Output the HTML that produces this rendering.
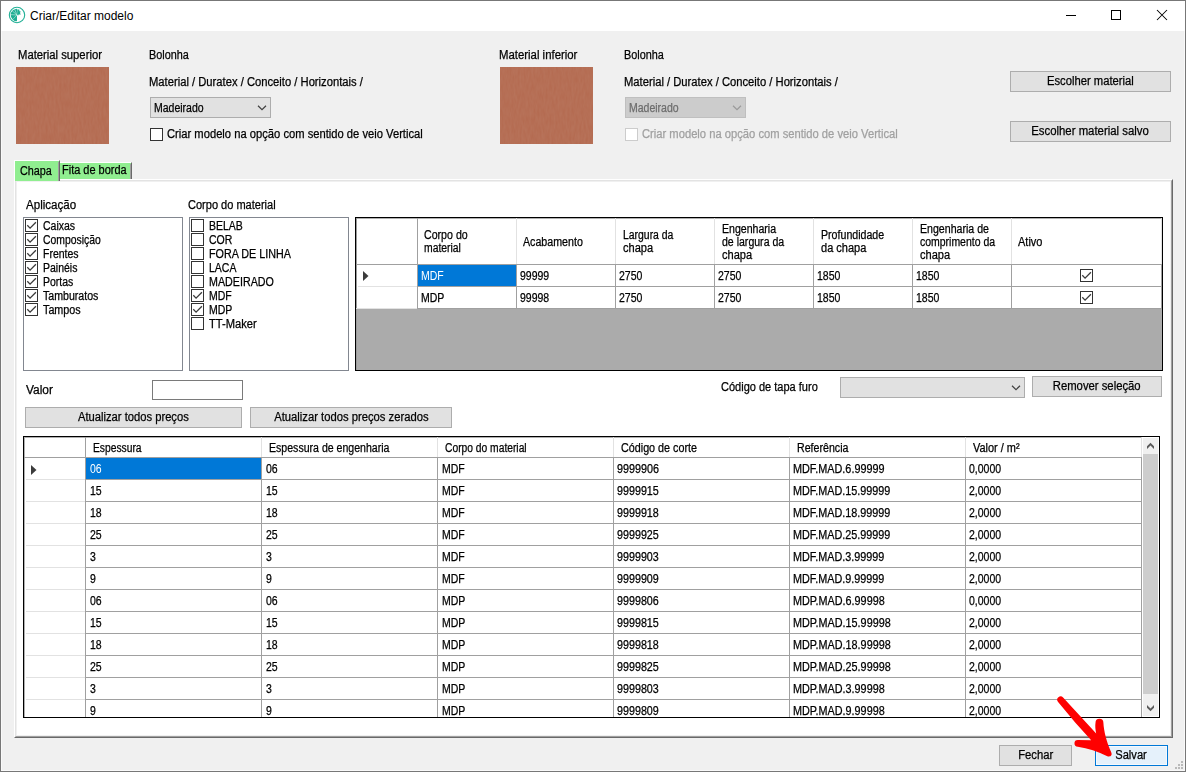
<!DOCTYPE html>
<html>
<head>
<meta charset="utf-8">
<title>Criar/Editar modelo</title>
<style>
*{box-sizing:border-box;margin:0;padding:0}
html,body{width:1186px;height:772px;overflow:hidden;background:#f0f0f0}
body{font-family:"Liberation Sans",sans-serif;font-size:12px;color:#000;position:relative}
.a{position:absolute}
.t{position:absolute;white-space:nowrap;line-height:14px;height:14px;transform-origin:0 50%;-webkit-text-stroke:0.25px}
.btn{position:absolute;background:#e1e1e1;border:1px solid #adadad;text-align:center;line-height:14px;white-space:nowrap;padding-top:2px}
.btn .s{display:inline-block;transform-origin:50% 50%;-webkit-text-stroke:0.25px}
.cb{position:absolute;width:13px;height:13px;background:#fff;border:1px solid #333}
.cb svg{position:absolute;left:-1px;top:-1px}
.lb{position:absolute;background:#fff;border:1px solid #828790}
.hl{position:absolute;height:1px;background:#a0a0a0}
.vl{position:absolute;width:1px;background:#a0a0a0}
</style>
</head>
<body>

<div class="a" style="left:1px;top:1px;width:1184px;height:30px;background:#fff"></div>
<div class="a" style="left:1px;top:31px;width:1184px;height:740px;border:1px solid #f9f9f9;border-top:none"></div>
<div class="a" style="left:0;top:0;width:1186px;height:772px;border:1px solid #777"></div>
<svg class="a" style="left:8px;top:6px" width="18" height="18" viewBox="0 0 18 18">
<circle cx="9" cy="9" r="7.7" fill="#fff" stroke="#22b096" stroke-width="1.1"/>
<path d="M9 9 L9 2.7 A6.3 6.3 0 0 0 9 15.3 Z" fill="#1eae93"/>
<path d="M9 9 L9.4 3.2 L11.6 3.8 L11.2 5 L12.9 5.8 L11.9 6.8 L12.8 8.4 L10.6 8.6 L10.3 9.6 Z" fill="#1eae93"/>
<path d="M9 9 L4.2 4.8 M9 9 L2.7 8.6 M9 9 L4.6 13.6 M9 9 L6.6 3.2" stroke="#fff" stroke-width="0.45" fill="none"/>
</svg>
<div class="a" id="title" style="left:30px;top:9px;font-size:12px;line-height:14px;white-space:nowrap">Criar/Editar modelo</div>
<svg class="a" style="left:1060px;top:5px" width="120" height="22" viewBox="0 0 120 22">
<path d="M6 10.5 H16" stroke="#000" stroke-width="1" fill="none"/>
<rect x="51.5" y="5.5" width="9" height="9" stroke="#000" stroke-width="1" fill="none"/>
<path d="M97 5 L107 15 M107 5 L97 15" stroke="#000" stroke-width="1.05" fill="none"/>
</svg>
<div class="t" style="left:18px;top:48px;transform:scaleX(0.939)">Material superior</div>
<svg class="a" style="left:16px;top:67px" width="93" height="77" viewBox="0 0 93 77">
<defs><filter id="g1" x="0" y="0" width="100%" height="100%"><feTurbulence type="fractalNoise" baseFrequency="0.5 0.12" numOctaves="2" seed="3"/><feColorMatrix values="0 0 0 0 0.56  0 0 0 0 0.3  0 0 0 0 0.22  0.3 0 0 0 -0.06"/></filter></defs>
<rect width="93" height="77" fill="#b46b51"/><rect width="93" height="77" filter="url(#g1)"/></svg>
<div class="t" style="left:149px;top:48px;transform:scaleX(0.904)">Bolonha</div>
<div class="t" style="left:149px;top:75px;transform:scaleX(0.935)">Material / Duratex / Conceito / Horizontais /</div>
<div class="a" style="left:150px;top:97px;width:121px;height:21px;background:#e1e1e1;border:1px solid #adadad"></div>
<div class="t" style="left:154px;top:101px;transform:scaleX(0.875)">Madeirado</div>
<svg class="a" style="left:257px;top:104px" width="10" height="7" viewBox="0 0 10 7"><path d="M1 1.8 L5 5.7 L9 1.8" stroke="#404040" stroke-width="1.2" fill="none"/></svg>
<div class="cb" style="left:150px;top:128px;"></div>
<div class="t" style="left:167px;top:127px;transform:scaleX(0.933)">Criar modelo na opção com sentido de veio Vertical</div>
<div class="t" style="left:499px;top:48px;transform:scaleX(0.948)">Material inferior</div>
<svg class="a" style="left:500px;top:67px" width="93" height="77" viewBox="0 0 93 77">
<defs><filter id="g2" x="0" y="0" width="100%" height="100%"><feTurbulence type="fractalNoise" baseFrequency="0.5 0.12" numOctaves="2" seed="7"/><feColorMatrix values="0 0 0 0 0.56  0 0 0 0 0.3  0 0 0 0 0.22  0.3 0 0 0 -0.06"/></filter></defs>
<rect width="93" height="77" fill="#b46b51"/><rect width="93" height="77" filter="url(#g2)"/></svg>
<div class="t" style="left:624px;top:48px;transform:scaleX(0.904)">Bolonha</div>
<div class="t" style="left:624px;top:75px;transform:scaleX(0.935)">Material / Duratex / Conceito / Horizontais /</div>
<div class="a" style="left:625px;top:97px;width:121px;height:21px;background:#cccccc;border:1px solid #bfbfbf"></div>
<div class="t" style="left:629px;top:101px;transform:scaleX(0.875);color:#6d6d6d">Madeirado</div>
<svg class="a" style="left:732px;top:104px" width="10" height="7" viewBox="0 0 10 7"><path d="M1 1.8 L5 5.7 L9 1.8" stroke="#9a9a9a" stroke-width="1.2" fill="none"/></svg>
<div class="cb" style="left:625px;top:128px;border-color:#cccccc;background:#fff"></div>
<div class="t" style="left:642px;top:127px;transform:scaleX(0.933);color:#a0a0a0">Criar modelo na opção com sentido de veio Vertical</div>
<div class="btn" style="left:1010px;top:71px;width:161px;height:21px;"><span class="s" style="transform:scaleX(0.937)">Escolher material</span></div>
<div class="btn" style="left:1010px;top:121px;width:161px;height:21px;"><span class="s" style="transform:scaleX(0.948)">Escolher material salvo</span></div>
<div class="a" style="left:14px;top:179px;width:1159px;height:559px;background:#fff;border-left:1px solid #fff;border-top:1px solid #fff;border-right:1px solid #696969;border-bottom:1px solid #696969"></div>
<div class="a" style="left:15px;top:180px;width:1157px;height:557px;border-left:1px solid #e3e3e3;border-top:1px solid #e3e3e3;border-right:1px solid #a0a0a0;border-bottom:1px solid #a0a0a0"></div>
<div class="a" style="left:16px;top:181px;width:1155px;height:555px;border:1px solid #f0f0f0"></div>
<div class="a" style="left:14px;top:160px;width:46px;height:21px;background:#90ee90;border-left:1px solid #fff;border-top:1px solid #fff;border-right:1px solid #696969"></div>
<div class="a" style="left:58px;top:162px;width:1px;height:19px;background:#a0a0a0"></div>
<div class="t" style="left:20px;top:164px;transform:scaleX(0.9)">Chapa</div>
<div class="a" style="left:60px;top:162px;width:72px;height:17px;background:#90ee90;border-top:1px solid #fff;border-right:1px solid #696969"></div>
<div class="a" style="left:130px;top:164px;width:1px;height:15px;background:#a0a0a0"></div>
<div class="t" style="left:62px;top:163px;transform:scaleX(0.914)">Fita de borda</div>
<div class="t" style="left:26px;top:198px;transform:scaleX(0.964)">Aplicação</div>
<div class="lb" style="left:23px;top:217px;width:160px;height:154px"></div>
<div class="cb" style="left:25px;top:219px;"><svg width="13" height="13" viewBox="0 0 13 13"><path d="M2.3 6.3 L5.05 9.1 L10.9 3.2" stroke="#3c3c3c" stroke-width="1.3" fill="none"/></svg></div>
<div class="t" style="left:42.5px;top:219px;transform:scaleX(0.875)">Caixas</div>
<div class="cb" style="left:25px;top:233px;"><svg width="13" height="13" viewBox="0 0 13 13"><path d="M2.3 6.3 L5.05 9.1 L10.9 3.2" stroke="#3c3c3c" stroke-width="1.3" fill="none"/></svg></div>
<div class="t" style="left:42.5px;top:233px;transform:scaleX(0.866)">Composição</div>
<div class="cb" style="left:25px;top:247px;"><svg width="13" height="13" viewBox="0 0 13 13"><path d="M2.3 6.3 L5.05 9.1 L10.9 3.2" stroke="#3c3c3c" stroke-width="1.3" fill="none"/></svg></div>
<div class="t" style="left:42.5px;top:247px;transform:scaleX(0.875)">Frentes</div>
<div class="cb" style="left:25px;top:261px;"><svg width="13" height="13" viewBox="0 0 13 13"><path d="M2.3 6.3 L5.05 9.1 L10.9 3.2" stroke="#3c3c3c" stroke-width="1.3" fill="none"/></svg></div>
<div class="t" style="left:42.5px;top:261px;transform:scaleX(0.875)">Painéis</div>
<div class="cb" style="left:25px;top:275px;"><svg width="13" height="13" viewBox="0 0 13 13"><path d="M2.3 6.3 L5.05 9.1 L10.9 3.2" stroke="#3c3c3c" stroke-width="1.3" fill="none"/></svg></div>
<div class="t" style="left:42.5px;top:275px;transform:scaleX(0.875)">Portas</div>
<div class="cb" style="left:25px;top:289px;"><svg width="13" height="13" viewBox="0 0 13 13"><path d="M2.3 6.3 L5.05 9.1 L10.9 3.2" stroke="#3c3c3c" stroke-width="1.3" fill="none"/></svg></div>
<div class="t" style="left:42.5px;top:289px;transform:scaleX(0.884)">Tamburatos</div>
<div class="cb" style="left:25px;top:303px;"><svg width="13" height="13" viewBox="0 0 13 13"><path d="M2.3 6.3 L5.05 9.1 L10.9 3.2" stroke="#3c3c3c" stroke-width="1.3" fill="none"/></svg></div>
<div class="t" style="left:42.5px;top:303px;transform:scaleX(0.897)">Tampos</div>
<div class="t" style="left:188px;top:198px;transform:scaleX(0.919)">Corpo do material</div>
<div class="lb" style="left:189px;top:217px;width:160px;height:154px"></div>
<div class="cb" style="left:191px;top:219px;"></div>
<div class="t" style="left:208.5px;top:219px;transform:scaleX(0.875)">BELAB</div>
<div class="cb" style="left:191px;top:233px;"></div>
<div class="t" style="left:208.5px;top:233px;transform:scaleX(0.875)">COR</div>
<div class="cb" style="left:191px;top:247px;"></div>
<div class="t" style="left:208.5px;top:247px;transform:scaleX(0.897)">FORA DE LINHA</div>
<div class="cb" style="left:191px;top:261px;"></div>
<div class="t" style="left:208.5px;top:261px;transform:scaleX(0.875)">LACA</div>
<div class="cb" style="left:191px;top:275px;"></div>
<div class="t" style="left:208.5px;top:275px;transform:scaleX(0.892)">MADEIRADO</div>
<div class="cb" style="left:191px;top:289px;"><svg width="13" height="13" viewBox="0 0 13 13"><path d="M2.3 6.3 L5.05 9.1 L10.9 3.2" stroke="#3c3c3c" stroke-width="1.3" fill="none"/></svg></div>
<div class="t" style="left:208.5px;top:289px;transform:scaleX(0.875)">MDF</div>
<div class="cb" style="left:191px;top:303px;"><svg width="13" height="13" viewBox="0 0 13 13"><path d="M2.3 6.3 L5.05 9.1 L10.9 3.2" stroke="#3c3c3c" stroke-width="1.3" fill="none"/></svg></div>
<div class="t" style="left:208.5px;top:303px;transform:scaleX(0.875)">MDP</div>
<div class="cb" style="left:191px;top:317px;"></div>
<div class="t" style="left:208.5px;top:317px;transform:scaleX(0.93)">TT-Maker</div>
<div class="a" style="left:355px;top:217px;width:808px;height:154px;background:#ababab;border:1px solid #000"></div>
<div class="a" style="left:356px;top:218px;width:806px;height:91px;background:#fff"></div>
<div class="a" style="left:356px;top:218px;width:806px;height:1px;background:#b0b0b0"></div>
<div class="a" style="left:356px;top:218px;width:1px;height:152px;background:#9a9a9a"></div>
<div class="hl" style="left:356px;top:264px;width:806px"></div>
<div class="hl" style="left:358px;top:286px;width:59px;background:#e2e2e2"></div>
<div class="hl" style="left:418px;top:286px;width:744px"></div>
<div class="hl" style="left:356px;top:308px;width:61px;background:#e2e2e2"></div>
<div class="hl" style="left:418px;top:308px;width:744px"></div>
<div class="vl" style="left:417px;top:218px;height:91px"></div>
<div class="vl" style="left:516px;top:218px;height:46px;background:#e2e2e2"></div>
<div class="vl" style="left:516px;top:264px;height:45px"></div>
<div class="vl" style="left:615px;top:218px;height:46px;background:#e2e2e2"></div>
<div class="vl" style="left:615px;top:264px;height:45px"></div>
<div class="vl" style="left:714px;top:218px;height:46px;background:#e2e2e2"></div>
<div class="vl" style="left:714px;top:264px;height:45px"></div>
<div class="vl" style="left:813px;top:218px;height:46px;background:#e2e2e2"></div>
<div class="vl" style="left:813px;top:264px;height:45px"></div>
<div class="vl" style="left:912px;top:218px;height:46px;background:#e2e2e2"></div>
<div class="vl" style="left:912px;top:264px;height:45px"></div>
<div class="vl" style="left:1011px;top:218px;height:46px;background:#e2e2e2"></div>
<div class="vl" style="left:1011px;top:264px;height:45px"></div>
<div class="vl" style="left:1161px;top:218px;height:46px;background:#e2e2e2"></div>
<div class="vl" style="left:1161px;top:264px;height:45px"></div>
<div class="a" style="left:418px;top:265px;width:98px;height:21px;background:#0078d7"></div>
<svg class="a" style="left:363px;top:271px" width="6" height="10" viewBox="0 0 6 10"><path d="M0 0 L5.5 5 L0 10 Z" fill="#3c3c3c"/></svg>
<div class="t" style="left:424px;top:228px;transform:scaleX(0.885)">Corpo do</div>
<div class="t" style="left:424px;top:241px;transform:scaleX(0.864)">material</div>
<div class="t" style="left:523px;top:235px;transform:scaleX(0.888)">Acabamento</div>
<div class="t" style="left:623px;top:228px;transform:scaleX(0.868)">Largura da</div>
<div class="t" style="left:623px;top:241px;transform:scaleX(0.922)">chapa</div>
<div class="t" style="left:721.5px;top:222px;transform:scaleX(0.881)">Engenharia</div>
<div class="t" style="left:721.5px;top:235px;transform:scaleX(0.879)">de largura da</div>
<div class="t" style="left:721.5px;top:248px;transform:scaleX(0.922)">chapa</div>
<div class="t" style="left:820.5px;top:228px;transform:scaleX(0.885)">Profundidade</div>
<div class="t" style="left:820.5px;top:241px;transform:scaleX(0.918)">da chapa</div>
<div class="t" style="left:919.5px;top:222px;transform:scaleX(0.883)">Engenharia de</div>
<div class="t" style="left:919.5px;top:235px;transform:scaleX(0.872)">comprimento da</div>
<div class="t" style="left:919.5px;top:248px;transform:scaleX(0.922)">chapa</div>
<div class="t" style="left:1018px;top:235px;transform:scaleX(0.916)">Ativo</div>
<div class="t" style="left:421px;top:269px;transform:scaleX(0.875);color:#fff;-webkit-text-stroke:0">MDF</div>
<div class="t" style="left:520px;top:269px;transform:scaleX(0.875)">99999</div>
<div class="t" style="left:619px;top:269px;transform:scaleX(0.875)">2750</div>
<div class="t" style="left:718px;top:269px;transform:scaleX(0.875)">2750</div>
<div class="t" style="left:817px;top:269px;transform:scaleX(0.875)">1850</div>
<div class="t" style="left:916px;top:269px;transform:scaleX(0.875)">1850</div>
<div class="cb" style="left:1080px;top:269px;"><svg width="13" height="13" viewBox="0 0 13 13"><path d="M2.3 6.3 L5.05 9.1 L10.9 3.2" stroke="#3c3c3c" stroke-width="1.3" fill="none"/></svg></div>
<div class="t" style="left:421px;top:291px;transform:scaleX(0.875)">MDP</div>
<div class="t" style="left:520px;top:291px;transform:scaleX(0.875)">99998</div>
<div class="t" style="left:619px;top:291px;transform:scaleX(0.875)">2750</div>
<div class="t" style="left:718px;top:291px;transform:scaleX(0.875)">2750</div>
<div class="t" style="left:817px;top:291px;transform:scaleX(0.875)">1850</div>
<div class="t" style="left:916px;top:291px;transform:scaleX(0.875)">1850</div>
<div class="cb" style="left:1080px;top:291px;"><svg width="13" height="13" viewBox="0 0 13 13"><path d="M2.3 6.3 L5.05 9.1 L10.9 3.2" stroke="#3c3c3c" stroke-width="1.3" fill="none"/></svg></div>
<div class="t" style="left:26px;top:383px;transform:scaleX(0.995)">Valor</div>
<div class="a" style="left:152px;top:380px;width:91px;height:20px;background:#fff;border:1px solid #7a7a7a"></div>
<div class="t" style="left:721px;top:380px;transform:scaleX(0.918)">Código de tapa furo</div>
<div class="a" style="left:840px;top:377px;width:185px;height:21px;background:#e1e1e1;border:1px solid #adadad"></div>
<svg class="a" style="left:1011px;top:384px" width="10" height="7" viewBox="0 0 10 7"><path d="M1 1.8 L5 5.7 L9 1.8" stroke="#404040" stroke-width="1.2" fill="none"/></svg>
<div class="btn" style="left:1032px;top:376px;width:130px;height:21px;"><span class="s" style="transform:scaleX(0.941)">Remover seleção</span></div>
<div class="btn" style="left:25px;top:407px;width:217px;height:21px;"><span class="s" style="transform:scaleX(0.934)">Atualizar todos preços</span></div>
<div class="btn" style="left:250px;top:407px;width:202px;height:21px;"><span class="s" style="transform:scaleX(0.937)">Atualizar todos preços zerados</span></div>
<div class="a" style="left:23px;top:436px;width:1137px;height:282px;background:#fff;border:1px solid #000;overflow:hidden">
<div class="a" style="left:0;top:0;width:1118px;height:1px;background:#b0b0b0"></div>
<div class="a" style="left:0;top:0;width:1px;height:280px;background:#b0b0b0"></div>
<div class="hl" style="left:0;top:20px;width:1118px"></div>
<div class="hl" style="left:2px;top:42px;width:59px;background:#e2e2e2"></div>
<div class="hl" style="left:62px;top:42px;width:1055px"></div>
<div class="hl" style="left:2px;top:64px;width:59px;background:#e2e2e2"></div>
<div class="hl" style="left:62px;top:64px;width:1055px"></div>
<div class="hl" style="left:2px;top:86px;width:59px;background:#e2e2e2"></div>
<div class="hl" style="left:62px;top:86px;width:1055px"></div>
<div class="hl" style="left:2px;top:108px;width:59px;background:#e2e2e2"></div>
<div class="hl" style="left:62px;top:108px;width:1055px"></div>
<div class="hl" style="left:2px;top:130px;width:59px;background:#e2e2e2"></div>
<div class="hl" style="left:62px;top:130px;width:1055px"></div>
<div class="hl" style="left:2px;top:152px;width:59px;background:#e2e2e2"></div>
<div class="hl" style="left:62px;top:152px;width:1055px"></div>
<div class="hl" style="left:2px;top:174px;width:59px;background:#e2e2e2"></div>
<div class="hl" style="left:62px;top:174px;width:1055px"></div>
<div class="hl" style="left:2px;top:196px;width:59px;background:#e2e2e2"></div>
<div class="hl" style="left:62px;top:196px;width:1055px"></div>
<div class="hl" style="left:2px;top:218px;width:59px;background:#e2e2e2"></div>
<div class="hl" style="left:62px;top:218px;width:1055px"></div>
<div class="hl" style="left:2px;top:240px;width:59px;background:#e2e2e2"></div>
<div class="hl" style="left:62px;top:240px;width:1055px"></div>
<div class="hl" style="left:2px;top:262px;width:59px;background:#e2e2e2"></div>
<div class="hl" style="left:62px;top:262px;width:1055px"></div>
<div class="hl" style="left:2px;top:284px;width:59px;background:#e2e2e2"></div>
<div class="hl" style="left:62px;top:284px;width:1055px"></div>
<div class="vl" style="left:61px;top:0;height:282px"></div>
<div class="vl" style="left:237px;top:0;height:20px;background:#e2e2e2"></div>
<div class="vl" style="left:237px;top:20px;height:262px"></div>
<div class="vl" style="left:413px;top:0;height:20px;background:#e2e2e2"></div>
<div class="vl" style="left:413px;top:20px;height:262px"></div>
<div class="vl" style="left:589px;top:0;height:20px;background:#e2e2e2"></div>
<div class="vl" style="left:589px;top:20px;height:262px"></div>
<div class="vl" style="left:765px;top:0;height:20px;background:#e2e2e2"></div>
<div class="vl" style="left:765px;top:20px;height:262px"></div>
<div class="vl" style="left:941px;top:0;height:20px;background:#e2e2e2"></div>
<div class="vl" style="left:941px;top:20px;height:262px"></div>
<div class="vl" style="left:1117px;top:0;height:20px;background:#e2e2e2"></div>
<div class="vl" style="left:1117px;top:20px;height:262px"></div>
<div class="a" style="left:62px;top:21px;width:175px;height:21px;background:#0078d7"></div>
<svg class="a" style="left:7px;top:28px" width="6" height="10" viewBox="0 0 6 10"><path d="M0 0 L5.5 5 L0 10 Z" fill="#3c3c3c"/></svg>
<div class="t" style="left:68.5px;top:4px;transform:scaleX(0.857)">Espessura</div>
<div class="t" style="left:244.5px;top:4px;transform:scaleX(0.881)">Espessura de engenharia</div>
<div class="t" style="left:420.5px;top:4px;transform:scaleX(0.856)">Corpo do material</div>
<div class="t" style="left:596.5px;top:4px;transform:scaleX(0.897)">Código de corte</div>
<div class="t" style="left:772.5px;top:4px;transform:scaleX(0.886)">Referência</div>
<div class="t" style="left:948.5px;top:4px;transform:scaleX(0.912)">Valor / m²</div>
<div class="t" style="left:65.5px;top:25px;transform:scaleX(0.875);color:#fff;-webkit-text-stroke:0">06</div>
<div class="t" style="left:241.5px;top:25px;transform:scaleX(0.875)">06</div>
<div class="t" style="left:417.5px;top:25px;transform:scaleX(0.875)">MDF</div>
<div class="t" style="left:592.5px;top:25px;transform:scaleX(0.899)">9999906</div>
<div class="t" style="left:768.5px;top:25px;transform:scaleX(0.903)">MDF.MAD.6.99999</div>
<div class="t" style="left:944.5px;top:25px;transform:scaleX(0.875)">0,0000</div>
<div class="t" style="left:65.5px;top:47px;transform:scaleX(0.875)">15</div>
<div class="t" style="left:241.5px;top:47px;transform:scaleX(0.875)">15</div>
<div class="t" style="left:417.5px;top:47px;transform:scaleX(0.875)">MDF</div>
<div class="t" style="left:592.5px;top:47px;transform:scaleX(0.895)">9999915</div>
<div class="t" style="left:768.5px;top:47px;transform:scaleX(0.9)">MDF.MAD.15.99999</div>
<div class="t" style="left:944.5px;top:47px;transform:scaleX(0.875)">2,0000</div>
<div class="t" style="left:65.5px;top:69px;transform:scaleX(0.875)">18</div>
<div class="t" style="left:241.5px;top:69px;transform:scaleX(0.875)">18</div>
<div class="t" style="left:417.5px;top:69px;transform:scaleX(0.875)">MDF</div>
<div class="t" style="left:592.5px;top:69px;transform:scaleX(0.895)">9999918</div>
<div class="t" style="left:768.5px;top:69px;transform:scaleX(0.9)">MDF.MAD.18.99999</div>
<div class="t" style="left:944.5px;top:69px;transform:scaleX(0.875)">2,0000</div>
<div class="t" style="left:65.5px;top:91px;transform:scaleX(0.875)">25</div>
<div class="t" style="left:241.5px;top:91px;transform:scaleX(0.875)">25</div>
<div class="t" style="left:417.5px;top:91px;transform:scaleX(0.875)">MDF</div>
<div class="t" style="left:592.5px;top:91px;transform:scaleX(0.895)">9999925</div>
<div class="t" style="left:768.5px;top:91px;transform:scaleX(0.9)">MDF.MAD.25.99999</div>
<div class="t" style="left:944.5px;top:91px;transform:scaleX(0.875)">2,0000</div>
<div class="t" style="left:65.5px;top:113px;transform:scaleX(0.875)">3</div>
<div class="t" style="left:241.5px;top:113px;transform:scaleX(0.875)">3</div>
<div class="t" style="left:417.5px;top:113px;transform:scaleX(0.875)">MDF</div>
<div class="t" style="left:592.5px;top:113px;transform:scaleX(0.895)">9999903</div>
<div class="t" style="left:768.5px;top:113px;transform:scaleX(0.9)">MDF.MAD.3.99999</div>
<div class="t" style="left:944.5px;top:113px;transform:scaleX(0.875)">2,0000</div>
<div class="t" style="left:65.5px;top:135px;transform:scaleX(0.875)">9</div>
<div class="t" style="left:241.5px;top:135px;transform:scaleX(0.875)">9</div>
<div class="t" style="left:417.5px;top:135px;transform:scaleX(0.875)">MDF</div>
<div class="t" style="left:592.5px;top:135px;transform:scaleX(0.895)">9999909</div>
<div class="t" style="left:768.5px;top:135px;transform:scaleX(0.9)">MDF.MAD.9.99999</div>
<div class="t" style="left:944.5px;top:135px;transform:scaleX(0.875)">2,0000</div>
<div class="t" style="left:65.5px;top:157px;transform:scaleX(0.875)">06</div>
<div class="t" style="left:241.5px;top:157px;transform:scaleX(0.875)">06</div>
<div class="t" style="left:417.5px;top:157px;transform:scaleX(0.875)">MDP</div>
<div class="t" style="left:592.5px;top:157px;transform:scaleX(0.895)">9999806</div>
<div class="t" style="left:768.5px;top:157px;transform:scaleX(0.9)">MDP.MAD.6.99998</div>
<div class="t" style="left:944.5px;top:157px;transform:scaleX(0.875)">0,0000</div>
<div class="t" style="left:65.5px;top:179px;transform:scaleX(0.875)">15</div>
<div class="t" style="left:241.5px;top:179px;transform:scaleX(0.875)">15</div>
<div class="t" style="left:417.5px;top:179px;transform:scaleX(0.875)">MDP</div>
<div class="t" style="left:592.5px;top:179px;transform:scaleX(0.895)">9999815</div>
<div class="t" style="left:768.5px;top:179px;transform:scaleX(0.9)">MDP.MAD.15.99998</div>
<div class="t" style="left:944.5px;top:179px;transform:scaleX(0.875)">2,0000</div>
<div class="t" style="left:65.5px;top:201px;transform:scaleX(0.875)">18</div>
<div class="t" style="left:241.5px;top:201px;transform:scaleX(0.875)">18</div>
<div class="t" style="left:417.5px;top:201px;transform:scaleX(0.875)">MDP</div>
<div class="t" style="left:592.5px;top:201px;transform:scaleX(0.895)">9999818</div>
<div class="t" style="left:768.5px;top:201px;transform:scaleX(0.9)">MDP.MAD.18.99998</div>
<div class="t" style="left:944.5px;top:201px;transform:scaleX(0.875)">2,0000</div>
<div class="t" style="left:65.5px;top:223px;transform:scaleX(0.875)">25</div>
<div class="t" style="left:241.5px;top:223px;transform:scaleX(0.875)">25</div>
<div class="t" style="left:417.5px;top:223px;transform:scaleX(0.875)">MDP</div>
<div class="t" style="left:592.5px;top:223px;transform:scaleX(0.895)">9999825</div>
<div class="t" style="left:768.5px;top:223px;transform:scaleX(0.9)">MDP.MAD.25.99998</div>
<div class="t" style="left:944.5px;top:223px;transform:scaleX(0.875)">2,0000</div>
<div class="t" style="left:65.5px;top:245px;transform:scaleX(0.875)">3</div>
<div class="t" style="left:241.5px;top:245px;transform:scaleX(0.875)">3</div>
<div class="t" style="left:417.5px;top:245px;transform:scaleX(0.875)">MDP</div>
<div class="t" style="left:592.5px;top:245px;transform:scaleX(0.895)">9999803</div>
<div class="t" style="left:768.5px;top:245px;transform:scaleX(0.9)">MDP.MAD.3.99998</div>
<div class="t" style="left:944.5px;top:245px;transform:scaleX(0.875)">2,0000</div>
<div class="t" style="left:65.5px;top:267px;transform:scaleX(0.875)">9</div>
<div class="t" style="left:241.5px;top:267px;transform:scaleX(0.875)">9</div>
<div class="t" style="left:417.5px;top:267px;transform:scaleX(0.875)">MDP</div>
<div class="t" style="left:592.5px;top:267px;transform:scaleX(0.895)">9999809</div>
<div class="t" style="left:768.5px;top:267px;transform:scaleX(0.9)">MDP.MAD.9.99998</div>
<div class="t" style="left:944.5px;top:267px;transform:scaleX(0.875)">2,0000</div>
<div class="a" style="left:1118px;top:0;width:17px;height:280px;background:#fff"></div>
<div class="a" style="left:1119px;top:1px;width:15px;height:278px;background:#f0f0f0"></div>
<div class="a" style="left:1119px;top:17px;width:15px;height:240px;background:#cdcdcd"></div>
<svg class="a" style="left:1118px;top:0" width="17" height="280" viewBox="1142 437 17 280"><path d="M1147 449 L1147 446.2 L1150.5 442.7 L1154 446.2 L1154 449 L1150.5 445.5 Z M1147 705 L1147 707.8 L1150.5 711.3 L1154 707.8 L1154 705 L1150.5 708.5 Z" fill="#5c5c5c"/></svg>
</div>
<div class="btn" style="left:999px;top:745px;width:73px;height:21px;"><span class="s" style="transform:scaleX(0.938)">Fechar</span></div>
<div class="btn" style="left:1095px;top:745px;width:73px;height:21px;background:#e5f1fb;border-color:#0078d7;box-shadow:inset 0 0 0 1px #f4f9fe"><span class="s" style="transform:scaleX(0.927)">Salvar</span></div>
<div class="a" style="left:1181px;top:761px;width:2px;height:2px;background:#b9b9b9"></div><div class="a" style="left:1178px;top:764px;width:2px;height:2px;background:#b9b9b9"></div><div class="a" style="left:1181px;top:764px;width:2px;height:2px;background:#b9b9b9"></div><div class="a" style="left:1175px;top:767px;width:2px;height:2px;background:#b9b9b9"></div><div class="a" style="left:1178px;top:767px;width:2px;height:2px;background:#b9b9b9"></div><div class="a" style="left:1181px;top:767px;width:2px;height:2px;background:#b9b9b9"></div>
<svg class="a" style="left:1040px;top:690px" width="90" height="75" viewBox="1040 690 90 75">
<path d="M1063.1 697.6 L1096.2 733.6 C1095.4 730 1095 726 1095.5 722.8 A3.95 3.95 0 0 1 1103.4 722.8 C1103.8 731 1106.5 742 1111.2 752.3 C1112.6 755.6 1110.4 757.2 1107.3 756.2 C1098 751.6 1088 748.2 1077.8 746.7 A3.35 3.35 0 0 1 1077.8 740 L1091.2 740.2 L1075.4 722.8 L1058.1 702 A3.3 3.3 0 0 1 1063.1 697.6 Z" fill="#fe0000"/>
</svg>
</body>
</html>
